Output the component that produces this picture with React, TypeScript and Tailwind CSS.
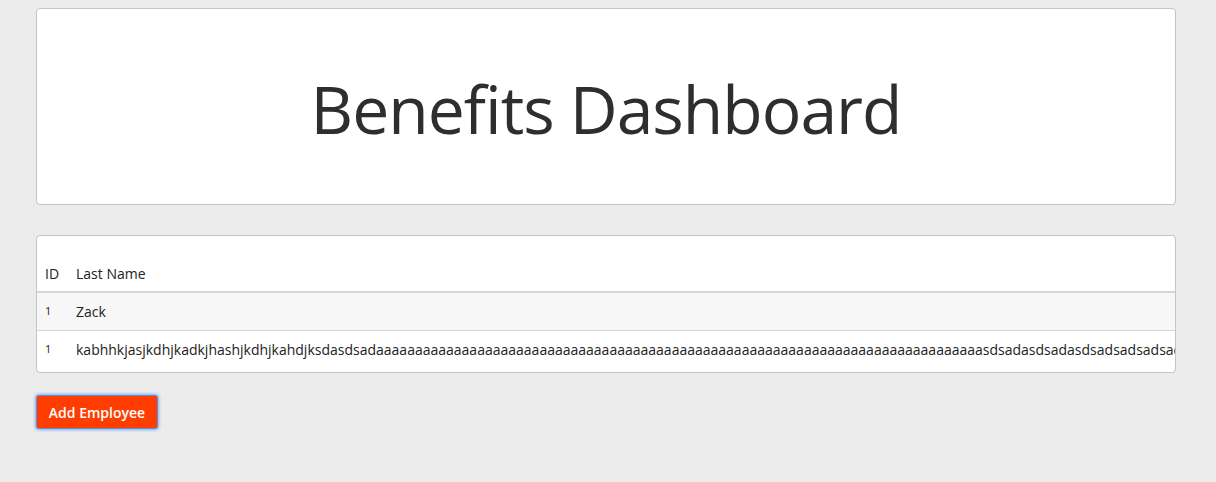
export default function App() {
  const rows = [
    { id: 1, lastName: 'Zack' },
    {
      id: 1,
      lastName:
        'kabhhkjasjkdhjkadkjhashjkdhjkahdjksdasdsadaaaaaaaaaaaaaaaaaaaaaaaaaaaaaaaaaaaaaaaaaaaaaaaaaaaaaaaaaaaaaaaaaaaaaaaaaaaaaasdsadasdsadasdsadsadsadsadasd',
    },
  ];

  return (
    <div className="min-h-[482px] bg-[#ececec] pt-[8px] pl-[36px] text-[#333]" style={{ fontFamily: '"Open Sans", "Noto Sans", sans-serif' }}>
      {/* Header card */}
      <div className="w-[1140px] h-[197px] bg-white border border-[#c4c4c4] rounded-[4px] flex items-center justify-center">
        <h1 className="text-[66px] tracking-[-1px] text-[#2e2e2e] leading-none pt-[2px]">Benefits Dashboard</h1>
      </div>

      {/* Employees table */}
      <div className="mt-[30px] w-[1140px] bg-white border border-[#c4c4c4] rounded-[4px] overflow-hidden pt-[19px] pb-[4px]">
        <table className="w-full text-[14px] text-[#222] whitespace-nowrap border-collapse table-fixed">
          <thead>
            <tr className="border-b-2 border-[#d6d6d6]">
              <th className="h-[37px] w-[39px] pl-[8px] text-left font-normal">ID</th>
              <th className="h-[37px] px-0 text-left font-normal">Last Name</th>
            </tr>
          </thead>
          <tbody>
            {rows.map((r, i) => (
              <tr key={i} className={i % 2 === 0 ? 'bg-[#f7f7f7] border-b border-[#d6d6d6]' : 'bg-white'}>
                <td className="h-[38px] pl-[8px] text-[11px]">{r.id}</td>
                <td className="h-[38px] px-0 overflow-hidden">{r.lastName}</td>
              </tr>
            ))}
          </tbody>
        </table>
      </div>

      <button className="mt-[22px] h-[34px] w-[122px] bg-[#ff3d00] text-white text-[14px] font-semibold rounded-[3px] border border-[#5b8fd6] shadow-[0_0_3px_1px_rgba(90,150,240,0.7)]">
        Add Employee
      </button>
    </div>
  );
}
